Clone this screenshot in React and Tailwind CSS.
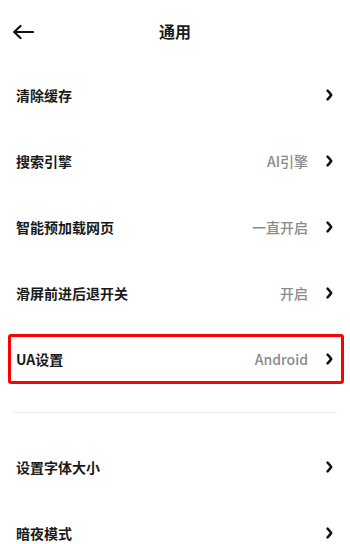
import React from "react";

function Chevron() {
  return (
    <svg width="7" height="12" viewBox="0 0 7 12" className="shrink-0">
      <path d="M1.6 1.6 Q3.6 3.6 5.2 6 Q3.6 8.4 1.6 10.4" fill="none" stroke="#111" strokeWidth="2.5" strokeLinecap="round" strokeLinejoin="round" />
    </svg>
  );
}

function Row({ label, value }) {
  return (
    <div className="h-[66px] flex items-center pl-4 pr-[17px]">
      <span className="text-[14px] font-bold text-[#1a1a1a] flex-1">{label}</span>
      {value && <span className="text-[14px] font-medium text-[#8a8a8a] mr-[18px]">{value}</span>}
      <Chevron />
    </div>
  );
}

export default function App() {
  const font = { fontFamily: '"Noto Sans CJK SC", "Noto Sans", sans-serif' };
  return (
    <div className="w-[350px] h-[544px] bg-white overflow-hidden" style={font}>
      <div className="h-[62px] relative flex items-center justify-center">
        <svg className="absolute left-[12px] top-[24px]" width="22" height="16" viewBox="0 0 22 16">
          <path d="M21 8 H2.5 M8.5 2 L2.2 8 L8.5 14" fill="none" stroke="#111" strokeWidth="2.2" strokeLinecap="round" strokeLinejoin="round" />
        </svg>
        <span className="text-[16px] font-bold text-[#1a1a1a]">通用</span>
      </div>
      <Row label="清除缓存" />
      <Row label="搜索引擎" value="AI引擎" />
      <Row label="智能预加载网页" value="一直开启" />
      <Row label="滑屏前进后退开关" value="开启" />
      <div className="h-[66px] flex items-center pl-2 pr-[6px]">
        <div className="flex-1 h-[50px] border-[3px] border-[#ff0000] rounded-[3px] flex items-center pl-[5px] pr-[8px]">
          <span className="text-[14px] font-bold text-[#1a1a1a] flex-1">UA设置</span>
          <span className="text-[14px] font-medium text-[#8a8a8a] mr-[18px]">Android</span>
          <Chevron />
        </div>
      </div>
      <div className="pt-[20px] pb-[21px] px-[13px]">
        <div className="h-px bg-[#ececec]" />
      </div>
      <Row label="设置字体大小" />
      <Row label="暗夜模式" />
    </div>
  );
}
